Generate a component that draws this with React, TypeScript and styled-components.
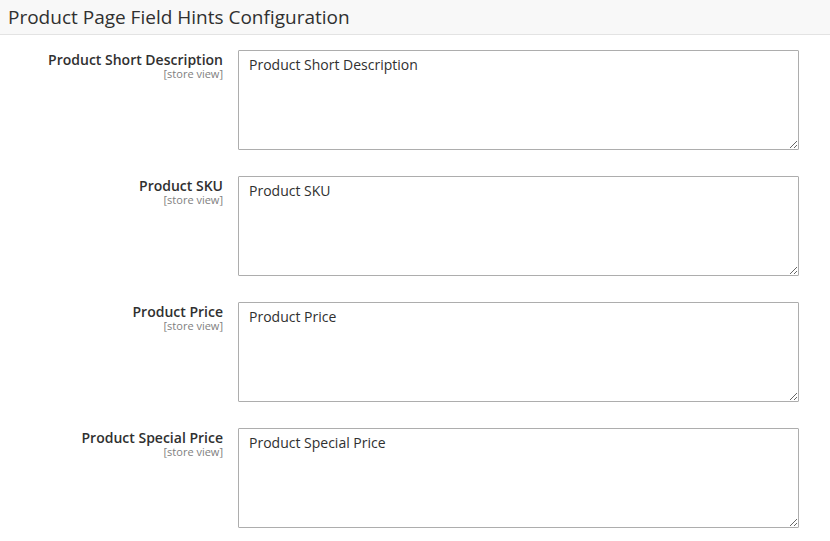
import React from "react";
import styled, { createGlobalStyle } from "styled-components";

const Global = createGlobalStyle`
  html, body { margin: 0; padding: 0; background: #ffffff; }
  body { font-family: "Open Sans", "Liberation Sans", sans-serif; color: #303030; }
`;

const Page = styled.div`
  width: 830px;
  min-height: 541px;
  background: #ffffff;
`;

const Header = styled.div`
  height: 35px;
  background: #f8f8f8;
  border-bottom: 1px solid #e3e3e3;
  display: flex;
  align-items: center;
  padding-left: 8px;
  box-sizing: border-box;
`;

const Title = styled.h2`
  margin: 0;
  font-size: 19px;
  font-weight: 400;
  color: #303030;
  line-height: 1;
`;

const Fields = styled.div`
  display: flex;
  flex-direction: column;
  gap: 26px;
  padding-top: 15px;
`;

const Row = styled.div`
  display: grid;
  grid-template-columns: 223px 561px;
  column-gap: 15px;
`;

const LabelCol = styled.div`
  display: flex;
  flex-direction: column;
  align-items: flex-end;
  padding-top: 1px;
`;

const Label = styled.label`
  display: block;
  font-size: 14px;
  font-weight: 600;
  line-height: 17px;
  color: #303030;
`;

const Scope = styled.span`
  display: block;
  font-size: 11px;
  line-height: 11px;
  color: #808080;
`;

const Area = styled.textarea`
  box-sizing: border-box;
  width: 561px;
  height: 100px;
  border: 1px solid #adadad;
  border-radius: 1px;
  padding: 4px 10px;
  font-family: "Open Sans", "Liberation Sans", sans-serif;
  font-size: 14px;
  line-height: 20px;
  color: #303030;
  background: #ffffff;
  resize: vertical;
  outline: none;
  margin: 0;
`;

const fields = [
  "Product Short Description",
  "Product SKU",
  "Product Price",
  "Product Special Price",
];

export default function App() {
  return (
    <Page>
      <Global />
      <Header>
        <Title>Product Page Field Hints Configuration</Title>
      </Header>
      <Fields>
        {fields.map((f) => (
          <Row key={f}>
            <LabelCol>
              <Label>{f}</Label>
              <Scope>[store view]</Scope>
            </LabelCol>
            <Area defaultValue={f} />
          </Row>
        ))}
      </Fields>
    </Page>
  );
}
